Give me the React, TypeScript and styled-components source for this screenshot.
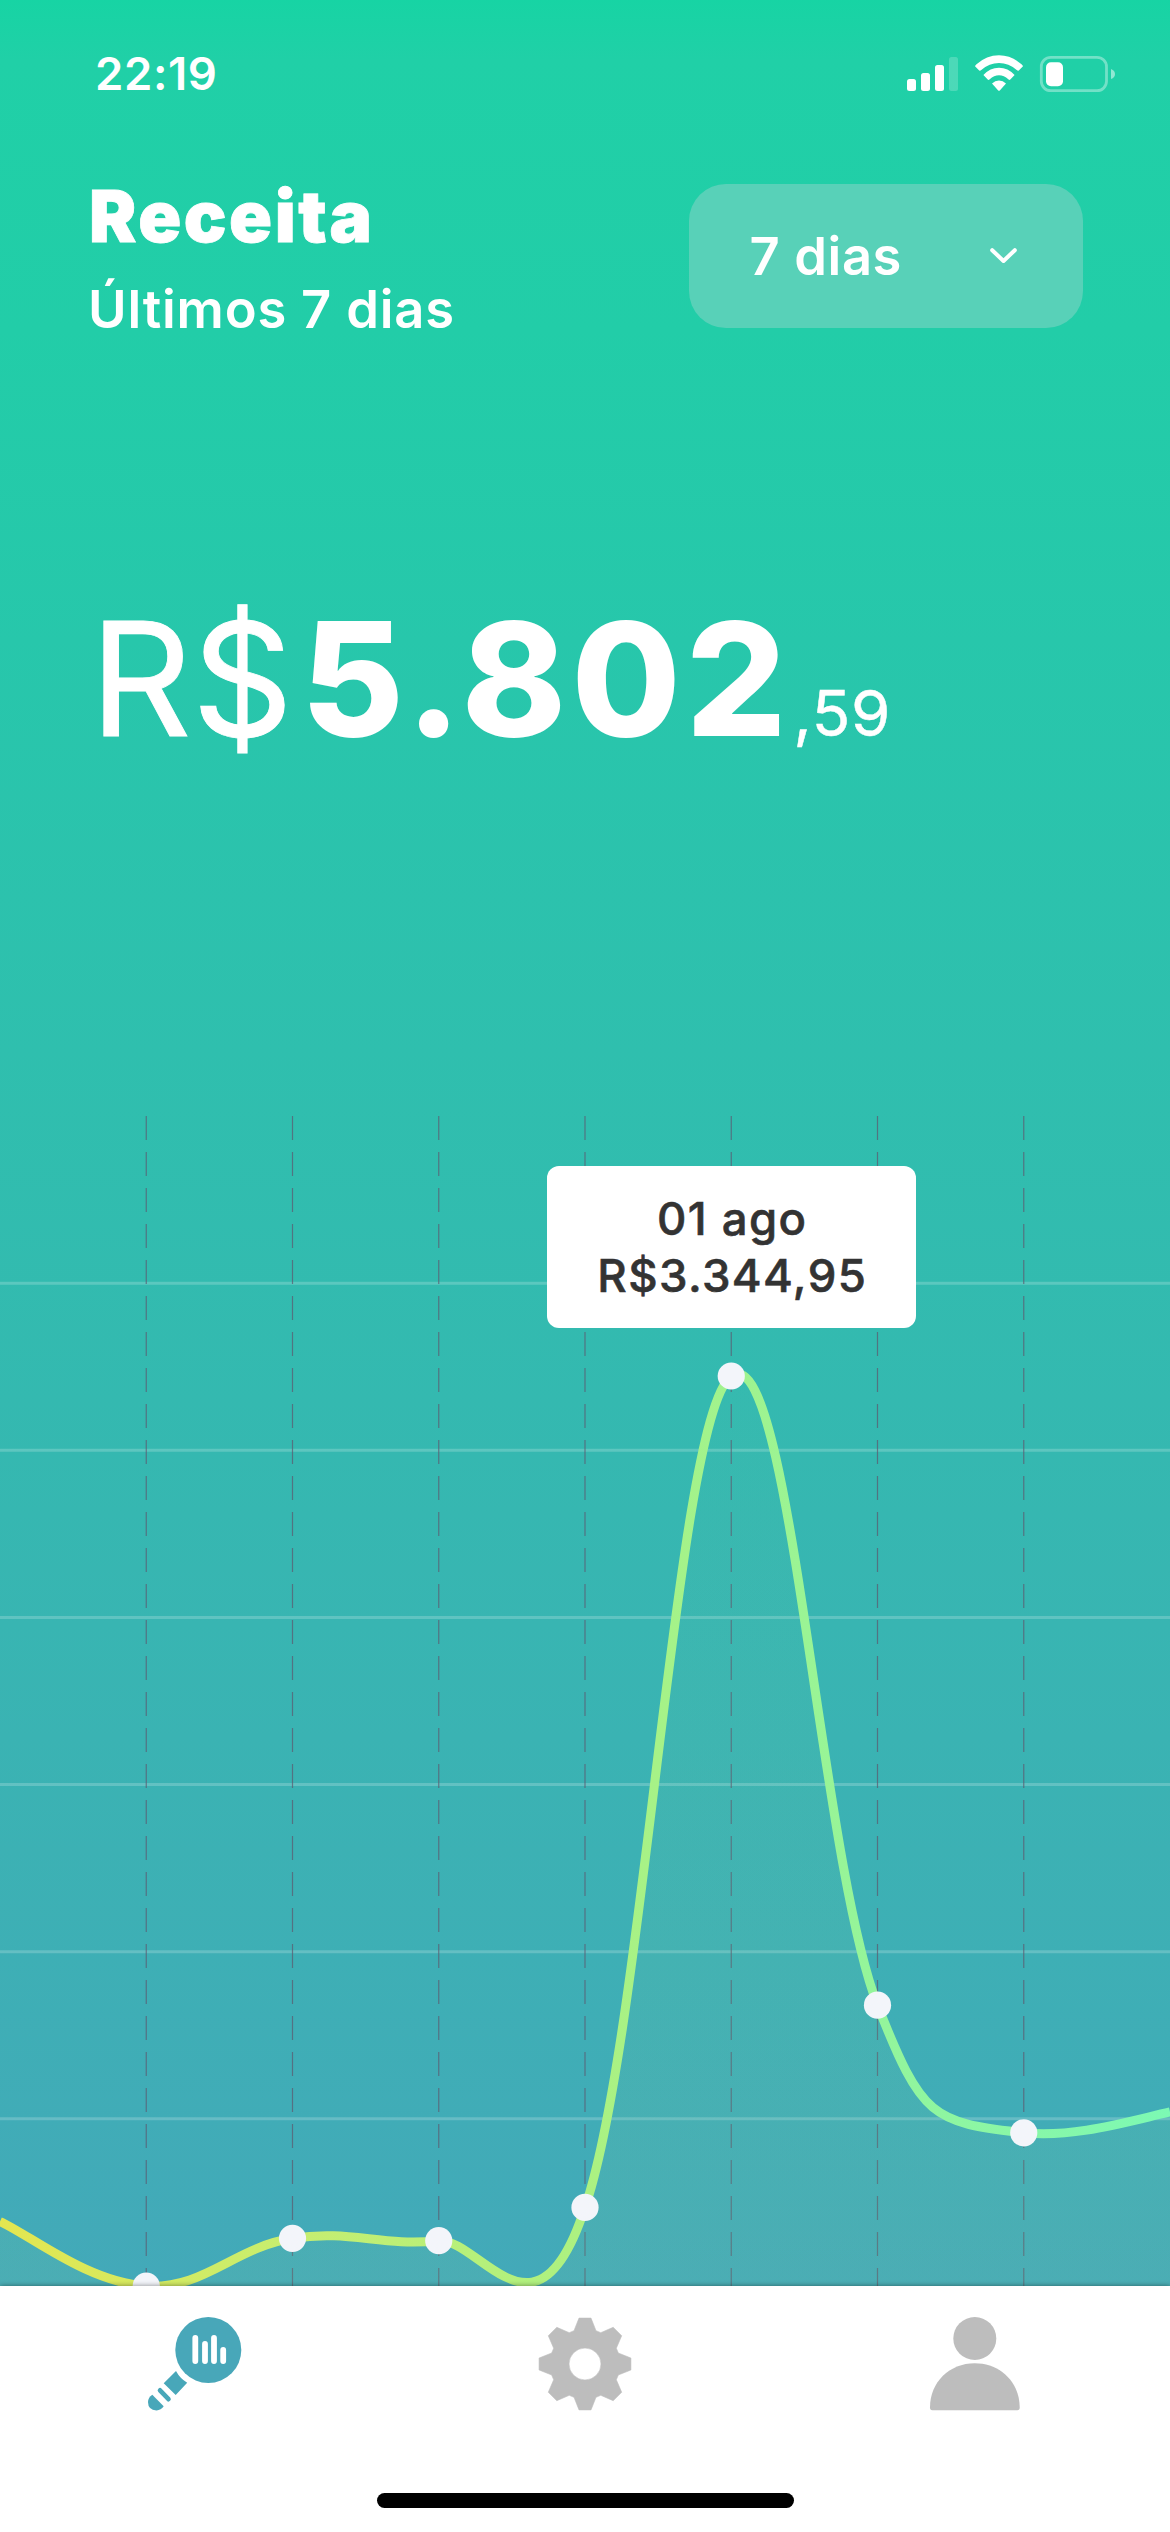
import React from "react";
import styled, { createGlobalStyle } from "styled-components";

const GlobalStyle = createGlobalStyle`
  * { box-sizing: border-box; }
  body { margin: 0; background: #fff; }
`;

const Screen = styled.main`
  width: 1170px;
  height: 2532px;
  display: flex;
  flex-direction: column;
  overflow: hidden;
  color: #fff;
  font-family: Inter, "Liberation Sans", sans-serif;
  background: linear-gradient(
    180deg,
    #17d4a4 0px,
    #20d0a7 60px,
    #22cda8 330px,
    #27c7ab 640px,
    #2fbfae 1050px,
    #34b9b0 1400px,
    #3cb1b4 1850px,
    #43a9b9 2286px
  );
`;

const StatusBar = styled.div`
  height: 148px;
  padding: 0 54px 0 95px;
  display: flex;
  align-items: center;
  justify-content: space-between;
`;

const Clock = styled.span`
  font-size: 45.5px;
  line-height: 54px;
  font-weight: 600;
  letter-spacing: 0.6px;
`;

const StatusIcons = styled.div`
  display: flex;
  align-items: center;
  svg { display: block; }
`;

const Header = styled.header`
  height: 435px;
  padding: 26px 87px 0 87px;
  display: flex;
  align-items: flex-start;
  justify-content: space-between;
`;

const Titles = styled.div`
  display: flex;
  flex-direction: column;
  gap: 19px;
`;

const Title = styled.h1`
  margin: 0;
  padding-left: 2px;
  font-size: 71px;
  line-height: 84px;
  font-weight: 900;
  letter-spacing: 2.5px;
  -webkit-text-stroke: 0.8px currentColor;
`;

const Subtitle = styled.p`
  margin: 0;
  padding-left: 1px;
  font-size: 52.5px;
  line-height: 64px;
  font-weight: 600;
  letter-spacing: 0.8px;
`;

const PeriodSelect = styled.button`
  width: 394px;
  height: 144px;
  margin: 10px 0 0;
  padding: 0 66px 0 60.5px;
  border: 0;
  border-radius: 37px;
  display: flex;
  align-items: center;
  justify-content: space-between;
  color: #fff;
  background: #58d1b8;
  font: inherit;
  font-size: 52.5px;
  line-height: 64px;
  font-weight: 600;
  letter-spacing: 0.6px;
  svg { display: block; }
`;

const Amount = styled.div`
  height: 533px;
  padding-left: 90px;
  display: flex;
  align-items: baseline;
  line-height: 192px;
  white-space: nowrap;
`;

const Currency = styled.span`
  font-size: 158px;
  font-weight: 400;
  -webkit-text-stroke: 0.9px currentColor;
`;

const Whole = styled.span`
  margin-left: 8px;
  font-size: 158px;
  font-weight: 800;
  letter-spacing: 5px;
`;

const Cents = styled.span`
  margin-left: 2px;
  font-size: 63.5px;
  font-weight: 400;
  letter-spacing: 0.8px;
  -webkit-text-stroke: 0.5px currentColor;
`;

const ChartArea = styled.section`
  position: relative;
  height: 1170px;
  overflow: hidden;
  svg { display: block; }
`;

const Tooltip = styled.div`
  position: absolute;
  left: 547px;
  top: 50px;
  width: 369px;
  height: 162px;
  padding-left: 1.5px;
  border-radius: 12px;
  display: flex;
  flex-direction: column;
  align-items: center;
  justify-content: center;
  background: #fff;
  color: #333;
  font-size: 45.5px;
  line-height: 57px;
  font-weight: 500;
  letter-spacing: 1.4px;
  -webkit-text-stroke: 0.6px currentColor;
`;

const TabBar = styled.nav`
  position: relative;
  height: 246px;
  display: flex;
  flex-direction: column;
  align-items: center;
  justify-content: space-between;
  padding: 30px 0 24px;
  background: #fff;
  box-shadow: 0 0 5px rgba(0, 0, 0, 0.45);
`;

const Tabs = styled.div`
  width: 100%;
  display: grid;
  grid-template-columns: repeat(3, 1fr);
  justify-items: center;
`;

const Tab = styled.div<{ $active?: boolean }>`
  width: 96px;
  height: 96px;
  color: ${(p) => (p.$active ? "#48a7b9" : "#bdbdbd")};
  svg { display: block; }
`;

const HomeIndicator = styled.div`
  width: 417px;
  height: 15px;
  border-radius: 8px;
  background: #000;
`;

type Point = [number, number];

const points: Point[] = [
  [0, 1105.5],
  [146.25, 1170],
  [292.5, 1122.3],
  [438.75, 1124.7],
  [585, 1091.4],
  [731.25, 260],
  [877.5, 889.2],
  [1023.75, 1016.8],
  [1170, 996],
];

const SMOOTHING = 0.2;

// Hand-tuned handles for the segments that start at the given point.
const tuned: Record<number, [Point, Point]> = {
  3: [[480, 1122], [537, 1240]],
  4: [[644, 920], [676, 302]],
  6: [[922, 1002], [932, 1006.5]],
  7: [[1073.75, 1021.5], [1122, 1007]],
};

function handle(i: number, direction: 1 | -1): Point {
  const prev = points[i - 1] ?? points[i];
  const next = points[i + 1] ?? points[i];
  return [
    points[i][0] + direction * SMOOTHING * (next[0] - prev[0]),
    points[i][1] + direction * SMOOTHING * (next[1] - prev[1]),
  ];
}

const curve = points
  .map((p, i) => {
    if (i === 0) return `M${p}`;
    const [from, to] = tuned[i - 1] ?? [handle(i - 1, 1), handle(i, -1)];
    return `C${from} ${to} ${p}`;
  })
  .join(" ");

const rows = [1, 2, 3, 4, 5, 6].map((n) => (n * 1170) / 7);

function RevenueChart() {
  return (
    <svg width="1170" height="1170" viewBox="0 0 1170 1170" fill="none">
      <defs>
        <linearGradient id="stroke" gradientUnits="userSpaceOnUse" x1="0" y1="0" x2="1170" y2="0">
          <stop offset="0" stopColor="#e4e650" />
          <stop offset="0.25" stopColor="#c6ee70" />
          <stop offset="0.5" stopColor="#acf181" />
          <stop offset="0.75" stopColor="#94f59b" />
          <stop offset="1" stopColor="#7cf9b4" />
        </linearGradient>
        <linearGradient id="area" gradientUnits="userSpaceOnUse" x1="0" y1="260" x2="0" y2="1170">
          <stop offset="0" stopColor="#8be090" stopOpacity="0.02" />
          <stop offset="1" stopColor="#8bd090" stopOpacity="0.11" />
        </linearGradient>
      </defs>
      {rows.map((y) => (
        <path key={y} d={`M0 ${y}H1170`} stroke="#fff" strokeOpacity="0.2" strokeWidth="3" />
      ))}
      {points.slice(1, -1).map(([x]) => (
        <path key={x} d={`M${x} 0V1170`} stroke="#5c5c72" strokeOpacity="0.75" strokeWidth="1.2" strokeDasharray="24 12" />
      ))}
      <path d={`${curve} V1170 H0Z`} fill="url(#area)" />
      <path d={curve} stroke="url(#stroke)" strokeWidth="9" />
      {points.slice(1, -1).map(([x, y]) => (
        <circle key={x} cx={x} cy={y} r="13.6" fill="#f3f5fa" />
      ))}
    </svg>
  );
}

function StatusGlyphs() {
  return (
    <svg width="209" height="40" viewBox="907 54 209 40" fill="#fff">
      <rect x="907" y="79" width="9" height="12" rx="2.5" />
      <rect x="921" y="73" width="9" height="18" rx="2.5" />
      <rect x="935" y="65" width="9" height="26" rx="2.5" />
      <rect x="949" y="57" width="9" height="34" rx="2.5" opacity="0.2" />
      <path d="M975 66.300Q975.300 65.300 976.500 64.300Q986.500 55.300 999 55.300Q1011.500 55.300 1021.500 64.300Q1022.700 65.300 1023 66.300L1018.800 70.600Q1017.800 71 1016.700 70Q1008.800 63 999 63Q989.200 63 981.300 70Q980.200 71 979.200 70.600Z" />
      <path d="M983.400 75Q990 67.700 999 67.700Q1008 67.700 1014.600 75L1010.300 79.600Q1009.300 80.300 1008.300 79.300Q1004 75.300 999 75.300Q994 75.300 989.700 79.300Q988.700 80.300 987.700 79.600Z" />
      <path d="M992 83.600Q995 80.500 999 80.500Q1003 80.500 1006 83.600L1000 90.200Q999 91.200 998 90.200Z" />
      <rect x="1041.300" y="57.300" width="65.200" height="33.400" rx="9.500" fill="none" stroke="#fff" strokeOpacity="0.37" strokeWidth="2.800" />
      <rect x="1046" y="62.200" width="17" height="24" rx="5" />
      <path d="M1111 69Q1115 70.500 1115 74Q1115 77.500 1111 79Z" opacity="0.5" />
    </svg>
  );
}

function AnalyticsIcon() {
  return (
    <svg width="96" height="96" viewBox="0 0 96 96" fill="currentColor">
      <circle cx="61.300" cy="34" r="33" />
      <path
        d="M48.300 22V45M58 28V45M67 22V45M76.200 34V45"
        stroke="#fff"
        strokeWidth="5.800"
        strokeLinecap="round"
      />
      <path d="M29 55Q33 62.500 40.200 66.700L28.700 79L16.700 67.300Z" />
      <path d="M13 74.300L21.500 83.200" stroke="currentColor" strokeWidth="4.600" strokeLinecap="round" />
      <path d="M5.300 78.700L16.700 90.300Q14 94.400 9.500 94.400Q1 94 1 86Q1 81.500 5.300 78.700Z" />
    </svg>
  );
}

const tooth: Point[] = [
  [-11, -33.3],
  [-6, -45.9],
  [6, -45.9],
  [11, -33.3],
];

const gearPath =
  Array.from({ length: 8 }, (_, k) => {
    const a = (k * Math.PI) / 4;
    const turned = tooth.map(
      ([x, y]) =>
        `${(48 + x * Math.cos(a) - y * Math.sin(a)).toFixed(2)} ${(48 + x * Math.sin(a) + y * Math.cos(a)).toFixed(2)}`
    );
    return `${k === 0 ? "M" : "L"}${turned.join("L")}`;
  }).join("") + "ZM64 48A16 16 0 1 0 32 48A16 16 0 1 0 64 48Z";

function SettingsIcon() {
  return (
    <svg width="96" height="96" viewBox="0 0 96 96" fill="currentColor">
      <path d={gearPath} fillRule="evenodd" stroke="currentColor" strokeWidth="0.600" strokeLinejoin="round" />
    </svg>
  );
}

function ProfileIcon() {
  return (
    <svg width="96" height="96" viewBox="0 0 96 96" fill="currentColor">
      <circle cx="47.800" cy="22.500" r="21.500" />
      <path d="M3 91.500C3 66 22.500 47.200 47.800 47.200S92.700 66 92.700 91.500Q92.700 94.200 90.500 94.200H5.200Q3 94.200 3 91.500Z" />
    </svg>
  );
}

export default function App() {
  return (
    <Screen>
      <GlobalStyle />
      <StatusBar>
        <Clock>22:19</Clock>
        <StatusIcons>
          <StatusGlyphs />
        </StatusIcons>
      </StatusBar>
      <Header>
        <Titles>
          <Title>Receita</Title>
          <Subtitle>Últimos 7 dias</Subtitle>
        </Titles>
        <PeriodSelect>
          <span>7 dias</span>
          <svg width="27" height="18" viewBox="0 0 27 18" fill="none">
            <path d="M2.200 3.200L13.500 14L24.800 3.200" stroke="#fff" strokeWidth="4" strokeLinecap="round" strokeLinejoin="round" />
          </svg>
        </PeriodSelect>
      </Header>
      <Amount>
        <Currency>R$</Currency>
        <Whole>5.802</Whole>
        <Cents>,59</Cents>
      </Amount>
      <ChartArea>
        <RevenueChart />
        <Tooltip>
          <span>01 ago</span>
          <span>R$3.344,95</span>
        </Tooltip>
      </ChartArea>
      <TabBar>
        <Tabs>
          <Tab $active>
            <AnalyticsIcon />
          </Tab>
          <Tab>
            <SettingsIcon />
          </Tab>
          <Tab>
            <ProfileIcon />
          </Tab>
        </Tabs>
        <HomeIndicator />
      </TabBar>
    </Screen>
  );
}
